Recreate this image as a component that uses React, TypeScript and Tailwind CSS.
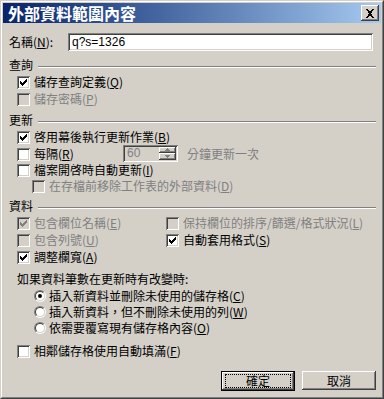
import type { ReactNode } from 'react';

const sunken =
  'shadow-[inset_1px_1px_0_#808080,inset_-1px_-1px_0_#ffffff,inset_2px_2px_0_#404040,inset_-2px_-2px_0_#d4d0c8]';
const raised =
  'shadow-[inset_-1px_-1px_0_#404040,inset_1px_1px_0_#ffffff,inset_-2px_-2px_0_#808080,inset_2px_2px_0_#d4d0c8]';

function Key({ label, k, tail = '' }: { label: string; k: string; tail?: string }) {
  return (
    <>
      {label}(<span className="underline">{k}</span>){tail}
    </>
  );
}

function CheckMark({ color }: { color: string }) {
  // classic 7x7 tick, one column at a time
  const cols = [2, 3, 4, 3, 2, 1, 0];
  return (
    <svg width="7" height="7" viewBox="0 0 7 7" className="absolute left-[3px] top-[3px]" shapeRendering="crispEdges">
      {cols.map((y, x) => (
        <rect key={x} x={x} y={y} width="1" height="3" fill={color} />
      ))}
    </svg>
  );
}

function Checkbox({
  checked = false,
  disabled = false,
  children,
}: {
  checked?: boolean;
  disabled?: boolean;
  children: ReactNode;
}) {
  return (
    <div className={`flex items-center h-[16px] ${disabled ? 'text-[#808080]' : 'text-black'}`}>
      <span className={`relative w-[13px] h-[13px] shrink-0 ${sunken} ${disabled ? 'bg-[#d4d0c8]' : 'bg-white'}`}>
        {checked && <CheckMark color={disabled ? '#808080' : '#000000'} />}
      </span>
      <span className="ml-[4px] whitespace-nowrap">{children}</span>
    </div>
  );
}

function Radio({ checked = false, children }: { checked?: boolean; children: ReactNode }) {
  return (
    <div className="flex items-center h-[16px] ml-[25px]">
      <span className="w-[12px] h-[12px] shrink-0 rounded-full border border-t-[#808080] border-l-[#808080] border-r-white border-b-white">
        <span className="flex items-center justify-center w-full h-full rounded-full bg-white border border-t-[#404040] border-l-[#404040] border-r-[#d4d0c8] border-b-[#d4d0c8]">
          {checked && <span className="w-[4px] h-[4px] rounded-full bg-black" />}
        </span>
      </span>
      <span className="ml-[3px] whitespace-nowrap">{children}</span>
    </div>
  );
}

function Section({ title, className = '' }: { title: string; className?: string }) {
  return (
    <div className={`flex items-center h-[16px] ${className}`}>
      <span className="whitespace-nowrap">{title}</span>
      <div className="ml-[5px] mr-[5px] mt-[3px] flex-1 h-[2px] border-t border-t-[#808080] border-b border-b-white" />
    </div>
  );
}

function Arrow({ up }: { up: boolean }) {
  return (
    <svg width="5" height="3" viewBox="0 0 5 3" shapeRendering="crispEdges">
      {up ? (
        <>
          <rect x="2" y="0" width="1" height="1" fill="#808080" />
          <rect x="1" y="1" width="3" height="1" fill="#808080" />
          <rect x="0" y="2" width="5" height="1" fill="#808080" />
        </>
      ) : (
        <>
          <rect x="0" y="0" width="5" height="1" fill="#808080" />
          <rect x="1" y="1" width="3" height="1" fill="#808080" />
          <rect x="2" y="2" width="1" height="1" fill="#808080" />
        </>
      )}
    </svg>
  );
}

export default function App() {
  return (
    <div className="w-[384px] h-[399px] bg-[#d4d0c8] border border-t-[#d4d0c8] border-l-[#d4d0c8] border-r-[#404040] border-b-[#404040] font-['Noto_Sans_CJK_TC','Noto_Sans_CJK_SC',sans-serif] text-[12px] leading-[16px] text-black select-none">
      <div className="h-full border border-t-white border-l-white border-r-[#808080] border-b-[#808080] p-px flex flex-col">
        {/* title bar */}
        <div className="h-[20px] shrink-0 flex items-center bg-gradient-to-r from-[#0a246a] to-[#a6caf0] pl-[5px] pr-[2px]">
          <span className="flex-1 text-white font-bold text-[16px] leading-[20px] whitespace-nowrap">外部資料範圍內容</span>
          <button className={`w-[18px] h-[16px] bg-[#d4d0c8] flex items-center justify-center ${raised}`}>
            <svg width="10" height="9" viewBox="0 0 10 9" shapeRendering="crispEdges">
              <path d="M1 0h2l2 2.5L7 0h2L6 4.5 9 9H7L5 6.5 3 9H1L4 4.5z" fill="#000" />
            </svg>
          </button>
        </div>

        <div className="flex flex-col pl-[6px]">
          {/* name */}
          <div className="flex items-center h-[18px] mt-[10px]">
            <span className="w-[59px] whitespace-nowrap">
              <Key label="名稱" k="N" tail=":" />
            </span>
            <div className={`w-[305px] h-[18px] bg-white ${sunken} flex items-center pl-[4px] font-['Liberation_Sans',sans-serif] text-[12px]`}>
              q?s=1326
            </div>
          </div>

          <Section title="查詢" className="mt-[6px]" />
          <div className="ml-[8px] mt-[1px] flex flex-col gap-[1px]">
            <Checkbox checked>
              <Key label="儲存查詢定義" k="Q" />
            </Checkbox>
            <Checkbox disabled>
              <Key label="儲存密碼" k="P" />
            </Checkbox>
          </div>

          <Section title="更新" className="mt-[5px]" />
          <div className="ml-[8px] mt-[1px] flex flex-col">
            <Checkbox checked>
              <Key label="啓用幕後執行更新作業" k="B" />
            </Checkbox>
            <div className="flex items-center h-[16px] mt-[1px]">
              <div className="w-[106px]">
                <Checkbox>
                  <Key label="每隔" k="R" />
                </Checkbox>
              </div>
              <div className={`-mt-[2px] w-[55px] h-[17px] bg-[#d4d0c8] ${sunken} flex items-center pl-[4px] pr-[2px] text-[#808080] font-['Liberation_Sans',sans-serif]`}>
                <span className="flex-1">60</span>
                <div className="flex flex-col w-[17px] h-[13px]">
                  <span className={`h-[6px] flex items-center justify-center bg-[#d4d0c8] ${raised}`}>
                    <Arrow up />
                  </span>
                  <span className={`h-[7px] flex items-center justify-center bg-[#d4d0c8] ${raised}`}>
                    <Arrow up={false} />
                  </span>
                </div>
              </div>
              <span className="ml-[9px] text-[#808080] whitespace-nowrap">分鐘更新一次</span>
            </div>
            <Checkbox>
              <Key label="檔案開啓時自動更新" k="I" />
            </Checkbox>
            <div className="ml-[15px]">
              <Checkbox disabled>
                <Key label="在存檔前移除工作表的外部資料" k="D" />
              </Checkbox>
            </div>
          </div>

          <Section title="資料" className="mt-[4px]" />
          <div className="ml-[8px] mt-[1px] grid grid-cols-[149px_1fr] gap-y-[1px]">
            <Checkbox checked disabled>
              <Key label="包含欄位名稱" k="E" />
            </Checkbox>
            <Checkbox disabled>
              <Key label="保持欄位的排序/篩選/格式狀況" k="L" />
            </Checkbox>
            <Checkbox disabled>
              <Key label="包含列號" k="U" />
            </Checkbox>
            <Checkbox checked>
              <Key label="自動套用格式" k="S" />
            </Checkbox>
            <Checkbox checked>
              <Key label="調整欄寬" k="A" />
            </Checkbox>
          </div>

          <div className="ml-[8px] mt-[6px] h-[16px] whitespace-nowrap">如果資料筆數在更新時有改變時:</div>
          <div className="mt-[1px] flex flex-col">
            <Radio checked>
              <Key label="插入新資料並刪除未使用的儲存格" k="C" />
            </Radio>
            <Radio>
              <Key label="插入新資料，但不刪除未使用的列" k="W" />
            </Radio>
            <Radio>
              <Key label="依需要覆寫現有儲存格內容" k="O" />
            </Radio>
          </div>

          <div className="ml-[8px] mt-[7px]">
            <Checkbox>
              <Key label="相鄰儲存格使用自動填滿" k="F" />
            </Checkbox>
          </div>

          {/* buttons */}
          <div className="mt-[12px] flex justify-end gap-[7px] pr-[5px]">
            <button className="w-[74px] h-[20px] border border-black bg-[#d4d0c8] p-0">
              <span className={`flex w-full h-full items-center justify-center ${raised}`}>
                <span className="flex items-center justify-center w-[64px] h-[12px] outline-1 outline-dotted outline-black">確定</span>
              </span>
            </button>
            <button className={`w-[74px] h-[19px] bg-[#d4d0c8] flex items-center justify-center ${raised}`}>取消</button>
          </div>
        </div>
      </div>
    </div>
  );
}
